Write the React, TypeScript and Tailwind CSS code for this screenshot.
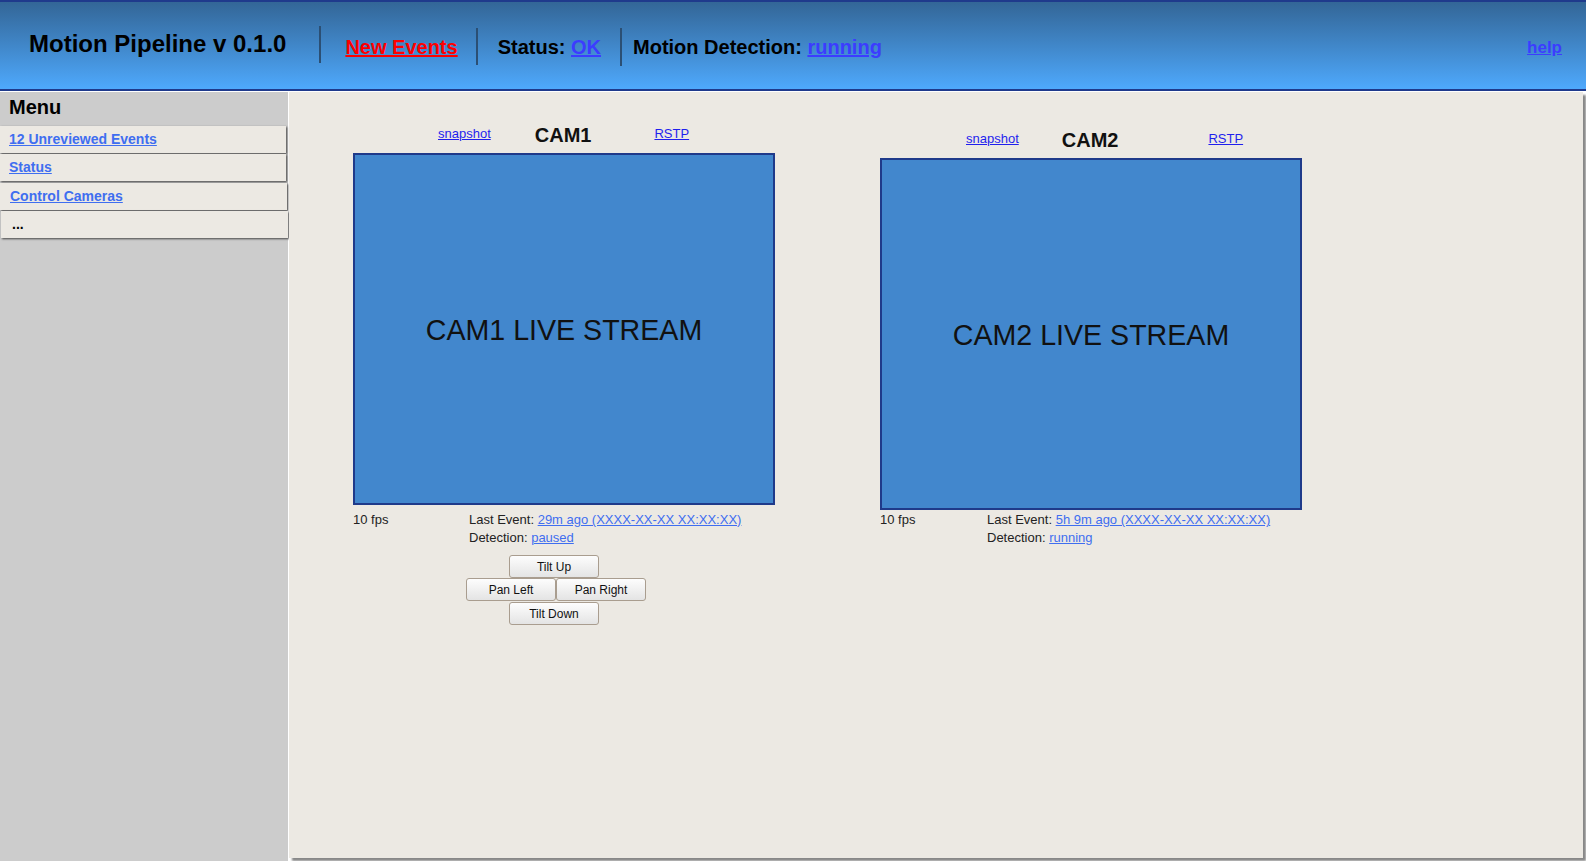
import React from "react";

function Btn({ label, className = "" }: { label: string; className?: string }) {
  return (
    <button
      className={
        "w-[90px] h-[23px] shrink-0 rounded-[3px] border border-[#a99d8f] bg-gradient-to-b from-[#fdfdfd] to-[#e4e4e4] text-[12px] text-[#111] leading-none flex items-center justify-center " +
        className
      }
    >
      {label}
    </button>
  );
}

function Cam({
  name,
  headPl,
  titleMl,
  rstpMl,
  infoMt,
  leftCol,
  lastEvent,
  detection,
  blockMt,
  blockMl,
  controls,
}: {
  name: string;
  headPl: string;
  titleMl: string;
  rstpMl: string;
  infoMt: string;
  leftCol: string;
  lastEvent: string;
  detection: string;
  blockMt: string;
  blockMl: string;
  controls?: boolean;
}) {
  return (
    <div className={"w-[422px] shrink-0 flex flex-col " + blockMt + " " + blockMl}>
      <div className={"h-[37px] flex items-center " + headPl}>
        <a className="mb-[2px] text-[13px] text-[#1f1fee] underline cursor-pointer">snapshot</a>
        <span className={"text-[20px] font-bold text-[#111] " + titleMl}>{name}</span>
        <a className={"mb-[2px] text-[13px] text-[#1f1fee] underline cursor-pointer " + rstpMl}>RSTP</a>
      </div>
      <div className="w-[422px] h-[352px] border-2 border-[#1f3a8a] bg-[#4287cd] flex items-center justify-center">
        <span className="mt-[2px] text-[28.6px] text-[#111]">{name} LIVE STREAM</span>
      </div>
      <div className={"flex text-[13px] leading-[18px] text-[#222] " + infoMt}>
        <div className={leftCol}>10 fps</div>
        <div className="flex flex-col">
          <div>
            Last Event: <a className="text-[#3f6ef0] underline cursor-pointer">{lastEvent}</a>
          </div>
          <div>
            Detection: <a className="text-[#3f6ef0] underline cursor-pointer">{detection}</a>
          </div>
        </div>
      </div>
      {controls && (
        <div className="mt-[8px] flex flex-col">
          <div className="flex pl-[156px]">
            <Btn label="Tilt Up" />
          </div>
          <div className="flex pl-[113px]">
            <Btn label="Pan Left" />
            <Btn label="Pan Right" />
          </div>
          <div className="flex pl-[156px] mt-[1px]">
            <Btn label="Tilt Down" />
          </div>
        </div>
      )}
    </div>
  );
}

export default function App() {
  return (
    <div className="w-[1586px] h-[861px] overflow-hidden bg-white font-['Liberation_Sans',Arial,sans-serif] text-black flex flex-col">
      <header className="h-[91px] shrink-0 border-t-2 border-b-2 border-[#1f3a8c] bg-gradient-to-b from-[#336697] to-[#4ea9fd] flex items-center">
        <div className="ml-[29px] mb-[3px] text-[24px] font-bold text-black whitespace-nowrap">
          Motion Pipeline v 0.1.0
        </div>
        <div className="ml-[33px] mb-[2px] w-[2px] h-[37px] bg-[#2b4f74]" />
        <a className="ml-[24px] mt-[2px] text-[20px] font-bold text-[#ff0000] underline cursor-pointer whitespace-nowrap">
          New Events
        </a>
        <div className="ml-[18px] mt-[2px] w-[2px] h-[37px] bg-[#2b4f74]" />
        <div className="ml-[20px] mt-[3px] text-[20px] font-bold text-black whitespace-nowrap">
          Status: <a className="text-[#3c3cff] underline cursor-pointer">OK</a>
        </div>
        <div className="ml-[19px] mt-[2px] w-[2px] h-[38px] bg-[#2b4f74]" />
        <div className="ml-[11px] mt-[3px] text-[20px] font-bold text-black whitespace-nowrap">
          Motion Detection: <a className="text-[#3c3cff] underline cursor-pointer">running</a>
        </div>
        <a className="ml-auto mr-[24px] mt-[4px] text-[17px] font-bold text-[#3c3cff] underline cursor-pointer">
          help
        </a>
      </header>
      <div className="mt-[1px] flex flex-1 min-h-0">
        <aside className="w-[288px] shrink-0 h-full bg-[#cccccc] flex flex-col">
          <div className="h-[34px] pl-[9px] text-[20px] leading-[30px] font-bold text-black">Menu</div>
          <div className="w-[286px] h-[27px] bg-[#ece9e3] shadow-[1px_1px_2px_#444] flex items-center pl-[9px]">
            <a className="text-[14px] font-bold text-[#3f6ef0] underline cursor-pointer">12 Unreviewed Events</a>
          </div>
          <div className="mt-[1px] w-[286px] h-[27px] bg-[#ece9e3] shadow-[1px_1px_2px_#444] flex items-center pl-[9px]">
            <a className="text-[14px] font-bold text-[#3f6ef0] underline cursor-pointer">Status</a>
          </div>
          <div className="mt-[2px] w-[287px] h-[27px] bg-[#ece9e3] shadow-[1px_1px_2px_#444] flex items-center pl-[10px]">
            <a className="text-[14px] font-bold text-[#3f6ef0] underline cursor-pointer">Control Cameras</a>
          </div>
          <div className="mt-[1px] ml-[1px] w-[287px] h-[27px] bg-[#ece9e3] shadow-[1px_1px_2px_#444] flex items-center pl-[11px]">
            <span className="text-[14px] font-bold text-black">...</span>
          </div>
        </aside>
        <main className="ml-[1px] w-[1294px] h-[766px] shrink-0 bg-[#ece9e3] shadow-[3px_3px_2px_#888] flex items-start pl-[64px]">
          <Cam
            name="CAM1"
            headPl="pl-[85px]"
            titleMl="ml-[44px]"
            rstpMl="ml-[63px]"
            infoMt="mt-[6px]"
            leftCol="w-[116px]"
            lastEvent="29m ago (XXXX-XX-XX XX:XX:XX)"
            detection="paused"
            blockMt="mt-[24px]"
            blockMl=""
            controls
          />
          <Cam
            name="CAM2"
            headPl="pl-[86px]"
            titleMl="ml-[43px]"
            rstpMl="ml-[90px]"
            infoMt="mt-[1px]"
            leftCol="w-[107px]"
            lastEvent="5h 9m ago (XXXX-XX-XX XX:XX:XX)"
            detection="running"
            blockMt="mt-[29px]"
            blockMl="ml-[105px]"
          />
        </main>
      </div>
    </div>
  );
}
